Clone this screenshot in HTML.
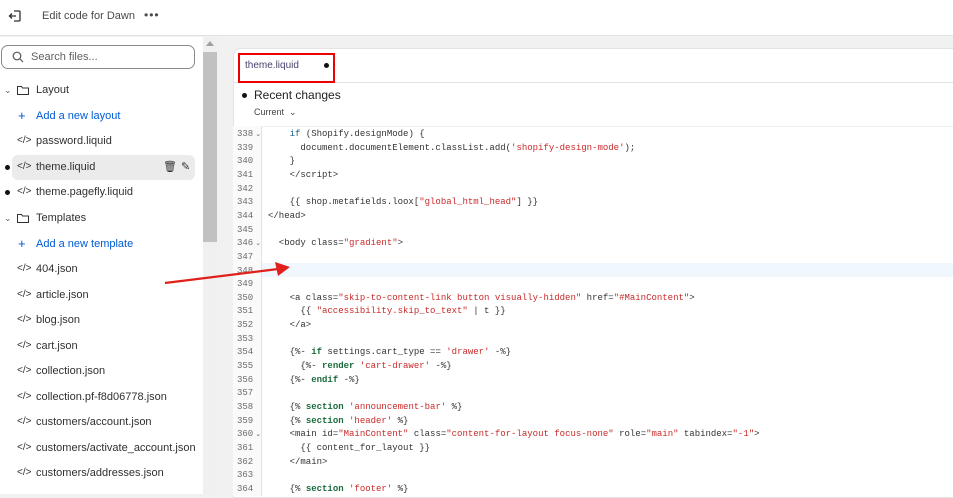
<!DOCTYPE html>
<html><head><style>
*{box-sizing:border-box;margin:0;padding:0}
body{width:953px;height:494px;overflow:hidden;background:#f1f1f1;font-family:"Liberation Sans",sans-serif;font-size:11px;color:#303030;position:relative}
.top{position:absolute;left:0;top:0;width:953px;height:36px;background:#fff;border-bottom:1px solid #e3e3e3}
.side{position:absolute;left:0;top:37px;width:203px;height:457px;background:#fff}
.sb{position:absolute;left:203px;top:37px;width:14px;height:457px;background:#f0f0f0}
.thumb{position:absolute;left:203px;top:52px;width:14px;height:190px;background:#c1c1c1}
.search{position:absolute;left:1px;top:45px;width:194px;height:24px;border:1px solid #8a8a8a;border-radius:7px}
.it{position:absolute;left:0;height:20px;line-height:20px;font-size:11px;color:#303030}
.it .ic{position:absolute;left:17px;top:0;font-size:10px;color:#303030}
.it .tx{position:absolute;left:36px;white-space:nowrap}
.blue .tx{color:#005bd3}
.dot{position:absolute;left:5px;top:8px;width:5px;height:5px;border-radius:50%;background:#111}
.ed{position:absolute;left:233px;top:48px;width:725px;height:450px;background:#fff;border:1px solid #e3e3e3;border-radius:8px 0 0 0}
.gut{position:absolute;left:233px;top:126px;width:29px;height:370px;background:#fafafa;border-right:1px solid #e3e3e3}
.ln{position:absolute;left:237px;font-family:"Liberation Mono",monospace;font-size:9px;color:#6b6b6b}
.cd{position:absolute;left:268px;font-family:"Liberation Mono",monospace;font-size:9px;color:#333;white-space:pre}
.s{color:#c92a2a}.k{color:#1a6b3c;font-weight:bold}.t{color:#333}
</style></head><body>
<div class="top">
<svg style="position:absolute;left:8px;top:9px" width="14" height="14" viewBox="0 0 14 14" fill="none" stroke="#303030" stroke-width="1.3"><path d="M6 2h5a1 1 0 0 1 1 1v8a1 1 0 0 1-1 1H6M1 7h7M4 4.5 1.5 7 4 9.5"/></svg>
<div style="position:absolute;left:42px;top:10px;font-size:11px;color:#4a4a4a">Edit code for Dawn</div>
<div style="position:absolute;left:144px;top:8px;font-size:12px;color:#4a4a4a;letter-spacing:1px">•••</div>
</div>
<div class="side"></div>
<div class="search"><svg style="position:absolute;left:10px;top:5px" width="12" height="12" viewBox="0 0 12 12" fill="none" stroke="#555" stroke-width="1.2"><circle cx="5" cy="5" r="3.8"/><path d="M8 8l3 3"/></svg><span style="position:absolute;left:29px;top:5px;color:#616161">Search files...</span></div>
<div style="position:absolute;left:12px;top:155px;width:183px;height:25px;background:#ebebeb;border-radius:6px"></div>
<div class="it" style="top:80px"><span style="position:absolute;left:4px;color:#666;font-size:9px">&#8964;</span><svg style="position:absolute;left:17px;top:5px" width="12" height="10" viewBox="0 0 12 10" fill="none" stroke="#303030"><path d="M.5 1.5h4l1 1.5h6v6.5H.5z"/></svg><span class="tx">Layout</span></div>
<div class="it blue" style="top:106px"><span class="ic" style="color:#005bd3;font-size:13px;left:18px">+</span><span class="tx">Add a new layout</span></div>
<div class="it" style="top:131px"><span class="ic">&lt;/&gt;</span><span class="tx">password.liquid</span></div>
<div class="it" style="top:157px"><span class="dot"></span><span class="ic">&lt;/&gt;</span><span class="tx">theme.liquid</span><span style="position:absolute;left:163px;font-size:11px">🗑</span><span style="position:absolute;left:181px;font-size:11px">✎</span></div>
<div class="it" style="top:182px"><span class="dot"></span><span class="ic">&lt;/&gt;</span><span class="tx">theme.pagefly.liquid</span></div>
<div class="it" style="top:208px"><span style="position:absolute;left:4px;color:#666;font-size:9px">&#8964;</span><svg style="position:absolute;left:17px;top:5px" width="12" height="10" viewBox="0 0 12 10" fill="none" stroke="#303030"><path d="M.5 1.5h4l1 1.5h6v6.5H.5z"/></svg><span class="tx">Templates</span></div>
<div class="it blue" style="top:234px"><span class="ic" style="color:#005bd3;font-size:13px;left:18px">+</span><span class="tx">Add a new template</span></div>
<div class="it" style="top:259px"><span class="ic">&lt;/&gt;</span><span class="tx">404.json</span></div>
<div class="it" style="top:285px"><span class="ic">&lt;/&gt;</span><span class="tx">article.json</span></div>
<div class="it" style="top:310px"><span class="ic">&lt;/&gt;</span><span class="tx">blog.json</span></div>
<div class="it" style="top:336px"><span class="ic">&lt;/&gt;</span><span class="tx">cart.json</span></div>
<div class="it" style="top:361px"><span class="ic">&lt;/&gt;</span><span class="tx">collection.json</span></div>
<div class="it" style="top:387px"><span class="ic">&lt;/&gt;</span><span class="tx">collection.pf-f8d06778.json</span></div>
<div class="it" style="top:412px"><span class="ic">&lt;/&gt;</span><span class="tx">customers/account.json</span></div>
<div class="it" style="top:438px"><span class="ic">&lt;/&gt;</span><span class="tx">customers/activate_account.json</span></div>
<div class="it" style="top:463px"><span class="ic">&lt;/&gt;</span><span class="tx">customers/addresses.json</span></div>
<div class="sb"></div><div class="thumb"></div>
<div style="position:absolute;left:206px;top:41px;width:0;height:0;border-left:4px solid transparent;border-right:4px solid transparent;border-bottom:5px solid #a0a0a0"></div>
<div class="ed"></div>
<div style="position:absolute;left:233px;top:82px;width:720px;border-top:1px solid #e3e3e3"></div>
<div style="position:absolute;left:245px;top:60px;font-size:10px;color:#4a3f6b">theme.liquid</div>
<div style="position:absolute;left:324px;top:63px;width:5px;height:5px;border-radius:50%;background:#111"></div>
<div style="position:absolute;left:238px;top:53px;width:97px;height:30px;border:2px solid #e00"></div>
<div style="position:absolute;left:242px;top:93px;width:5px;height:5px;border-radius:50%;background:#111"></div>
<div style="position:absolute;left:254px;top:88px;font-size:12px;color:#222">Recent changes</div>
<div style="position:absolute;left:254px;top:107px;font-size:9px;color:#444">Current &nbsp;&#8964;</div>
<div style="position:absolute;left:233px;top:126px;width:720px;border-top:1px solid #eee"></div>
<div class="gut"></div>
<div style="position:absolute;left:262px;top:263px;width:691px;height:14px;background:#f0f8fd"></div>
<div id="code"></div>
<svg style="position:absolute;left:160px;top:258px" width="140" height="32"><path d="M5 25 L118 11" stroke="#e0201b" stroke-width="2.2"/><path d="M130 9 L115 4 L118 18 Z" fill="#e0201b"/></svg>
<script>
var L=[
[338,'    <span class="k" style="font-weight:normal;color:#1a5c8a">if</span> (Shopify.designMode) {',1],
[339,'      document.documentElement.classList.add(<span class="s">\'shopify-design-mode\'</span>);'],
[340,'    }'],[341,'    &lt;/script&gt;'],[342,''],
[343,'    {{ shop.metafields.loox[<span class="s">"global_html_head"</span>] }}'],
[344,'&lt;/head&gt;'],[345,''],
[346,'  &lt;body class=<span class="s">"gradient"</span>&gt;',1],[347,''],[348,''],[349,''],
[350,'    &lt;a class=<span class="s">"skip-to-content-link button visually-hidden"</span> href=<span class="s">"#MainContent"</span>&gt;'],
[351,'      {{ <span class="s">"accessibility.skip_to_text"</span> | t }}'],
[352,'    &lt;/a&gt;'],[353,''],
[354,'    {%- <span class="k">if</span> settings.cart_type == <span class="s">\'drawer\'</span> -%}'],
[355,'      {%- <span class="k">render</span> <span class="s">\'cart-drawer\'</span> -%}'],
[356,'    {%- <span class="k">endif</span> -%}'],[357,''],
[358,'    {% <span class="k">section</span> <span class="s">\'announcement-bar\'</span> %}'],
[359,'    {% <span class="k">section</span> <span class="s">\'header\'</span> %}'],
[360,'    &lt;main id=<span class="s">"MainContent"</span> class=<span class="s">"content-for-layout focus-none"</span> role=<span class="s">"main"</span> tabindex=<span class="s">"-1"</span>&gt;',1],
[361,'      {{ content_for_layout }}'],[362,'    &lt;/main&gt;'],[363,''],
[364,'    {% <span class="k">section</span> <span class="s">\'footer\'</span> %}']];
var h='';L.forEach(function(r,i){var y=129+i*13.65;
h+='<div class="ln" style="top:'+y+'px">'+r[0]+(r[2]?'<span style="font-size:7px;margin-left:2px">&#8964;</span>':'')+'</div><div class="cd" style="top:'+y+'px">'+r[1]+'</div>';});
document.getElementById('code').innerHTML=h;
</script>
</body></html>
